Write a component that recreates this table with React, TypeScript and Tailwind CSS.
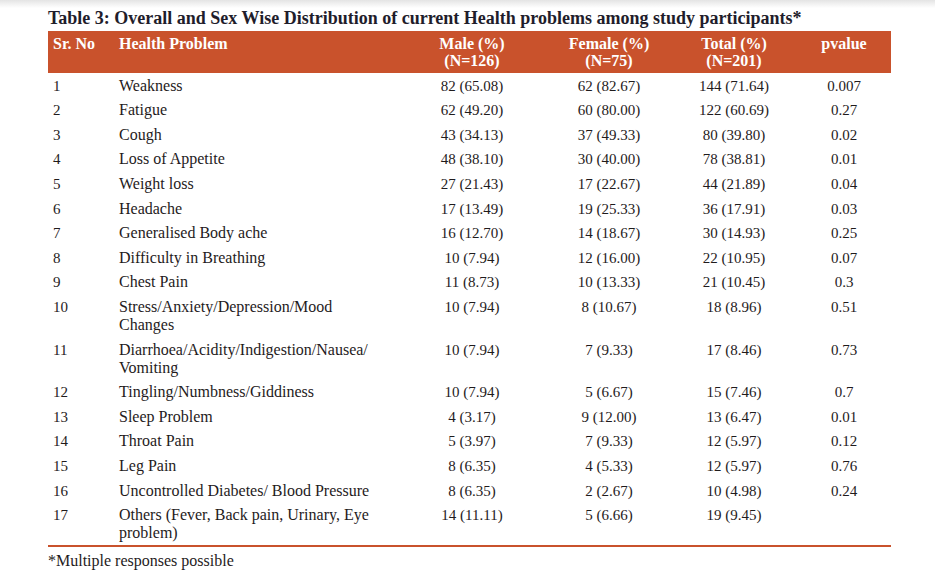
const rows: { no: string; problem: React.ReactNode; male: string; female: string; total: string; p: string }[] = [
  { no: "1", problem: "Weakness", male: "82 (65.08)", female: "62 (82.67)", total: "144 (71.64)", p: "0.007" },
  { no: "2", problem: "Fatigue", male: "62 (49.20)", female: "60 (80.00)", total: "122 (60.69)", p: "0.27" },
  { no: "3", problem: "Cough", male: "43 (34.13)", female: "37 (49.33)", total: "80 (39.80)", p: "0.02" },
  { no: "4", problem: "Loss of Appetite", male: "48 (38.10)", female: "30 (40.00)", total: "78 (38.81)", p: "0.01" },
  { no: "5", problem: "Weight loss", male: "27 (21.43)", female: "17 (22.67)", total: "44 (21.89)", p: "0.04" },
  { no: "6", problem: "Headache", male: "17 (13.49)", female: "19 (25.33)", total: "36 (17.91)", p: "0.03" },
  { no: "7", problem: "Generalised Body ache", male: "16 (12.70)", female: "14 (18.67)", total: "30 (14.93)", p: "0.25" },
  { no: "8", problem: "Difficulty in Breathing", male: "10 (7.94)", female: "12 (16.00)", total: "22 (10.95)", p: "0.07" },
  { no: "9", problem: "Chest Pain", male: "11 (8.73)", female: "10 (13.33)", total: "21 (10.45)", p: "0.3" },
  {
    no: "10",
    problem: (
      <>
        Stress/Anxiety/Depression/Mood
        <br />
        Changes
      </>
    ),
    male: "10 (7.94)",
    female: "8 (10.67)",
    total: "18 (8.96)",
    p: "0.51",
  },
  {
    no: "11",
    problem: (
      <>
        Diarrhoea/Acidity/Indigestion/Nausea/
        <br />
        Vomiting
      </>
    ),
    male: "10 (7.94)",
    female: "7 (9.33)",
    total: "17 (8.46)",
    p: "0.73",
  },
  { no: "12", problem: "Tingling/Numbness/Giddiness", male: "10 (7.94)", female: "5 (6.67)", total: "15 (7.46)", p: "0.7" },
  { no: "13", problem: "Sleep Problem", male: "4 (3.17)", female: "9 (12.00)", total: "13 (6.47)", p: "0.01" },
  { no: "14", problem: "Throat Pain", male: "5 (3.97)", female: "7 (9.33)", total: "12 (5.97)", p: "0.12" },
  { no: "15", problem: "Leg Pain", male: "8 (6.35)", female: "4 (5.33)", total: "12 (5.97)", p: "0.76" },
  { no: "16", problem: "Uncontrolled Diabetes/ Blood Pressure", male: "8 (6.35)", female: "2 (2.67)", total: "10 (4.98)", p: "0.24" },
  {
    no: "17",
    problem: (
      <>
        Others (Fever, Back pain, Urinary, Eye
        <br />
        problem)
      </>
    ),
    male: "14 (11.11)",
    female: "5 (6.66)",
    total: "19 (9.45)",
    p: "",
  },
];

export default function App() {
  return (
    <div
      className="relative h-[580px] w-[935px] overflow-hidden bg-white pl-[48px] pt-[7px] text-[#1f1b1c]"
      style={{ fontFamily: '"Liberation Serif", "Times New Roman", serif' }}
    >
      {/* faint shadow from the viewer toolbar */}
      <div className="pointer-events-none absolute inset-x-0 top-0 h-[8px] bg-gradient-to-b from-[#e4e4e4] to-white" />

      <h2 className="relative text-[18px] font-bold leading-[22px] text-[#1f1d2b]">
        Table 3: Overall and Sex Wise Distribution of current Health problems among study participants*
      </h2>

      <table className="mt-[2px] w-[843px] table-fixed border-collapse border-b-2 border-[#c9522c] text-[16px]">
        <colgroup>
          <col className="w-[65px]" />
          <col className="w-[284px]" />
          <col className="w-[150px]" />
          <col className="w-[124px]" />
          <col className="w-[126px]" />
          <col className="w-[94px]" />
        </colgroup>
        <thead>
          <tr className="bg-[#c9522c] align-top text-[16px] font-bold leading-[17px] text-white">
            <th className="py-[4px] pl-[5px] text-left">Sr. No</th>
            <th className="py-[4px] pl-[6px] text-left">Health Problem</th>
            <th className="py-[4px] text-center">
              Male (%)
              <br />
              (N=126)
            </th>
            <th className="py-[4px] text-center">
              Female (%)
              <br />
              (N=75)
            </th>
            <th className="py-[4px] text-center">
              Total (%)
              <br />
              (N=201)
            </th>
            <th className="py-[4px] text-center">pvalue</th>
          </tr>
        </thead>
        <tbody>
          {rows.map((r) => (
            <tr key={r.no} className="align-top leading-[18px]">
              <td className="pb-[3px] pt-[3.6px] pl-[5px] text-[15px]">{r.no}</td>
              <td className="pb-[3px] pt-[3.6px] pl-[6px]">{r.problem}</td>
              <td className="pb-[3px] pt-[3.6px] text-center text-[15px]">{r.male}</td>
              <td className="pb-[3px] pt-[3.6px] text-center text-[15px]">{r.female}</td>
              <td className="pb-[3px] pt-[3.6px] text-center text-[15px]">{r.total}</td>
              <td className="pb-[3px] pt-[3.6px] text-center text-[15px]">{r.p}</td>
            </tr>
          ))}
        </tbody>
      </table>

      <p className="mt-[4px] text-[16px] leading-[20px]">*Multiple responses possible</p>
    </div>
  );
}
